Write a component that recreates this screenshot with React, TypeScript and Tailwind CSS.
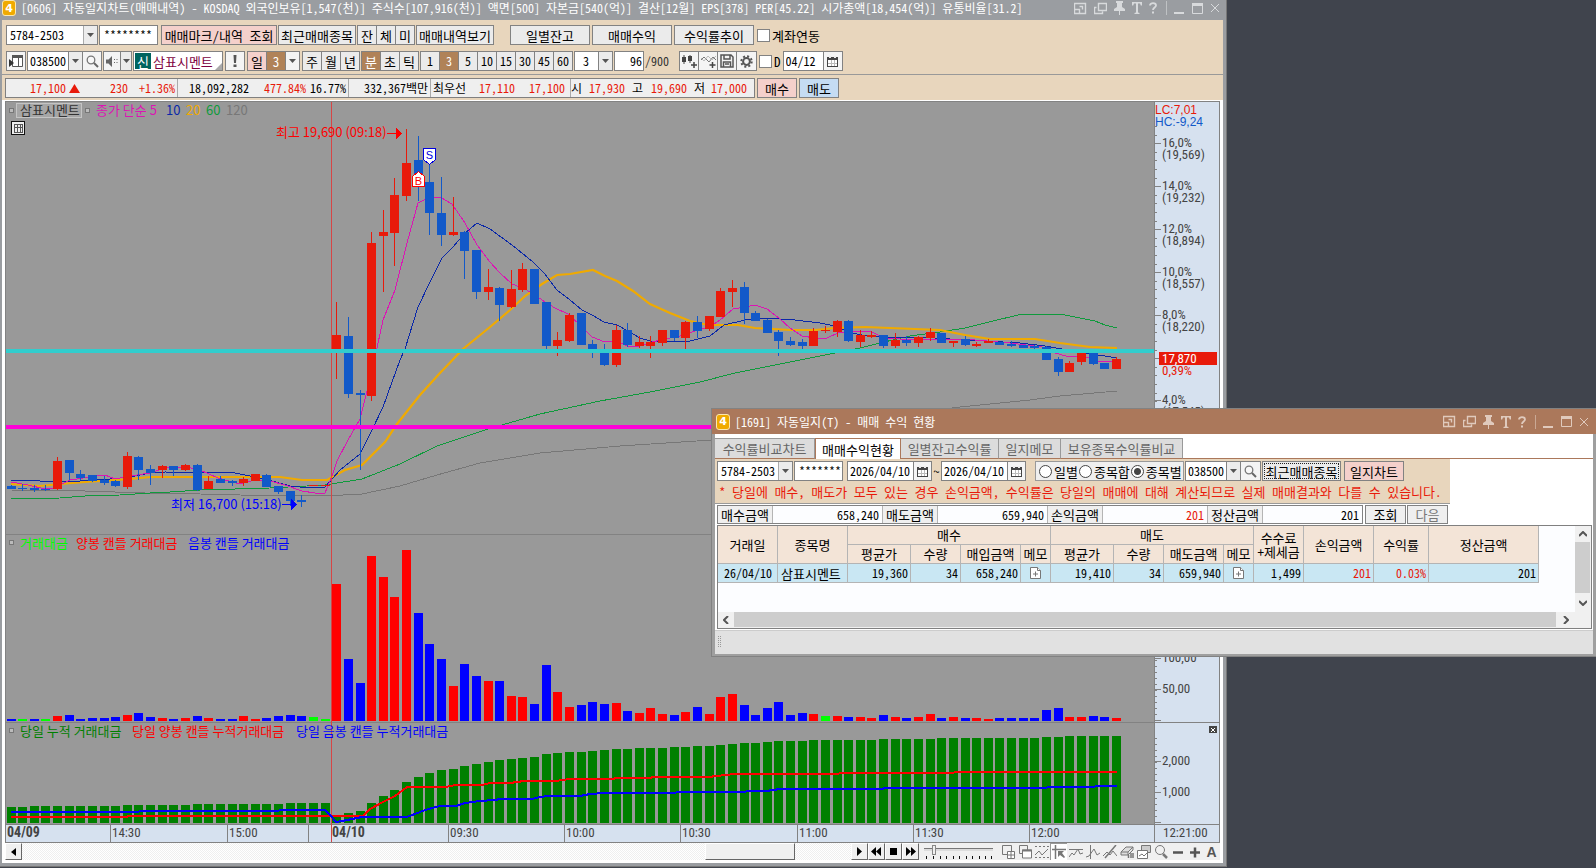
import type { ReactNode } from 'react';

const RED = '#e81a0a';
const BLUE = '#1259c9';
const PITCH = 11.635;

type Candle = [string, number, number, number, number];

/* colour, body top, body bottom, wick top, wick bottom */
const candles: Candle[] = [
  ['b', 486, 489, 485, 489], ['b', 488, 489, 484, 491], ['b', 488, 490, 485, 492], ['b', 489, 490, 485, 491],
  ['r', 461, 489, 457, 490], ['b', 460, 473, 460, 480], ['b', 474, 478, 470, 480], ['b', 475, 481, 475, 482],
  ['b', 480, 483, 476, 485], ['b', 481, 486, 480, 487], ['r', 456, 487, 452, 489], ['b', 457, 470, 456, 480],
  ['b', 469, 473, 465, 485], ['r', 466, 470, 465, 478], ['b', 466, 470, 466, 476], ['r', 465, 470, 464, 471],
  ['b', 465, 490, 464, 491], ['r', 481, 489, 476, 489], ['b', 479, 483, 476, 483], ['b', 481, 483, 480, 486],
  ['r', 479, 483, 477, 486], ['r', 474, 481, 474, 481], ['b', 475, 487, 474, 487], ['b', 486, 492, 486, 494],
  ['b', 491, 501, 491, 506], ['b', 500, 502, 495, 507], ['r', 485, 486, 485, 486], ['r', 485, 486, 485, 486],
  ['r', 335, 350, 302, 379], ['b', 336, 394, 317, 398], ['b', 393, 395, 390, 470], ['r', 243, 396, 232, 401],
  ['r', 232, 236, 210, 292], ['r', 195, 233, 178, 266], ['r', 163, 196, 129, 201], ['b', 160, 178, 136, 201],
  ['b', 182, 213, 163, 235], ['b', 213, 235, 177, 246], ['r', 232, 235, 197, 236], ['b', 232, 251, 231, 279],
  ['b', 250, 292, 250, 299], ['r', 287, 292, 269, 300], ['b', 288, 305, 287, 321], ['r', 289, 307, 270, 308],
  ['r', 269, 290, 263, 292], ['b', 269, 304, 269, 304], ['b', 302, 346, 302, 349], ['r', 340, 346, 332, 356],
  ['r', 315, 341, 313, 342], ['b', 313, 345, 313, 345], ['b', 344, 349, 340, 358], ['b', 350, 365, 344, 366],
  ['r', 330, 365, 325, 367], ['b', 330, 345, 323, 347], ['r', 342, 346, 336, 348], ['r', 342, 346, 336, 358],
  ['r', 330, 343, 330, 346], ['b', 330, 338, 330, 341], ['r', 322, 338, 321, 349], ['b', 322, 331, 316, 338],
  ['r', 316, 329, 316, 331], ['r', 291, 317, 288, 317], ['r', 288, 292, 280, 307], ['b', 287, 313, 282, 324],
  ['b', 313, 321, 311, 321], ['b', 320, 333, 319, 333], ['b', 332, 341, 330, 356], ['b', 341, 345, 337, 346],
  ['b', 342, 346, 339, 349], ['r', 331, 346, 328, 346], ['r', 330, 331, 326, 333], ['r', 321, 332, 320, 337],
  ['b', 321, 341, 320, 342], ['r', 335, 342, 330, 347], ['r', 335, 337, 331, 338], ['b', 335, 346, 335, 348],
  ['r', 340, 346, 333, 348], ['b', 340, 343, 336, 346], ['r', 337, 343, 336, 347], ['r', 332, 338, 328, 341],
  ['b', 333, 343, 333, 343], ['r', 341, 343, 341, 347], ['b', 339, 345, 336, 346], ['r', 344, 346, 342, 347],
  ['r', 341, 343, 339, 343], ['b', 342, 345, 342, 345], ['b', 344, 346, 341, 347], ['b', 345, 348, 345, 348],
  ['b', 346, 348, 345, 349], ['b', 347, 360, 346, 360], ['b', 359, 372, 357, 376], ['r', 363, 372, 361, 372],
  ['r', 353, 362, 353, 365], ['b', 353, 364, 353, 365], ['b', 363, 369, 363, 369], ['r', 359, 369, 357, 369],
];

const volumes =
  'b2 g2 b2 g2 r5 b6 b2 b3 b3 b4 r6 b8 b4 r3 b2 r3 b5 r3 b2 b2 r5 r2 b3 b5 b6 b5 g4 g2 r137 b62 b38 r165 r144 r124 r171 b108 b77 b62 r35 b57 b45 r40 b40 r25 r24 b17 b56 r29 r14 b16 b19 b17 r18 b10 r8 r13 r7 b6 r9 b14 r7 r24 r27 b16 b6 b13 b19 b6 b8 r7 g5 r5 b4 r4 r3 b6 r4 b3 r4 r7 b3 r4 b3 r3 r2 b3 b3 b3 b3 b11 b13 r4 r4 b5 b4 r3'
    .split(' ')
    .map((v) => ({ tone: v[0], h: Number(v.slice(1)) }));

const totals = [
  16, 16, 17, 17, 17, 17, 17, 17, 17, 17, 18, 18, 18, 18, 18, 18, 19, 19, 19, 19, 19, 19, 19, 19, 20, 20, 20, 20,
  7, 10, 12, 20, 27, 33, 41, 46, 50, 53, 54, 57, 59, 61, 63, 64, 65, 66, 69, 70, 71, 71, 72, 73, 74, 74, 75, 75, 75,
  76, 76, 77, 77, 78, 79, 80, 80, 81, 82, 82, 82, 83, 83, 83, 83, 83, 83, 84, 84, 84, 84, 84, 85, 85, 85, 85, 85, 85,
  85, 85, 85, 86, 86, 87, 87, 87, 87, 87,
];

const ma5 =
  '11,482 28,485 45,489 54,488 70,480 90,477 105,475 115,479 130,476 150,473 165,468 187,467 200,470 218,478 240,484 255,480 270,481 285,485 302,491 315,493 325,493 332,476 337,461 348,440 360,419 366,395 377,348 383,320 395,290 407,243 418,203 430,197 440,197 452,204 465,223 477,245 490,262 500,273 512,284 525,289 535,295 545,302 555,308 568,314 580,325 592,337 605,342 615,341 628,346 640,346 652,342 670,338 685,335 697,330 708,328 720,320 733,309 745,307 755,305 767,309 779,318 790,328 802,336 815,338 827,338 838,333 850,331 862,331 872,332 884,338 900,339 950,339 975,340 1010,343 1042,347 1055,353 1066,356 1075,356 1090,358 1100,362 1117,361';
const ma10 =
  '11,480 40,481 80,481 110,479 130,477 150,473 165,472 235,473 265,479 290,486 300,487 325,487 340,470 360,454 372,430 383,407 400,360 405,349 418,307 430,282 442,258 453,247 465,233 477,223 490,229 512,245 533,262 545,274 557,290 570,300 582,310 592,315 604,322 617,325 628,331 640,338 650,341 690,341 710,336 724,325 745,320 765,318 795,320 820,323 835,326 848,332 862,335 885,337 920,337 950,339 985,341 1020,343 1045,346 1062,349 1090,354 1105,356 1117,358';
const ma20 =
  '11,484 40,486 60,484 85,482 130,479 150,477 165,477 280,477 302,480 327,480 345,470 362,465 385,442 397,424 420,395 440,373 463,349 490,327 510,310 525,296 542,284 557,275 570,274 593,270 605,276 617,281 633,291 650,304 670,313 690,321 708,325 738,325 755,328 790,330 815,330 835,328 865,327 940,330 965,335 990,339 1035,339 1060,343 1090,347 1117,348';
const ma60 =
  '11,499 60,498 85,496 120,495 150,493 170,492 200,490 270,488 325,485 362,479 400,464 437,446 488,429 540,414 600,401 650,392 700,382 735,373 770,366 800,360 835,353 860,348 880,343 910,336 940,332 965,328 985,323 1022,314 1040,315 1060,314 1080,318 1095,321 1105,325 1117,328';
const ma120 =
  '11,490 85,491 145,493 200,494 240,495 325,496 362,494 400,486 437,475 480,463 540,453 620,446 712,440 800,429 900,415 960,407 1030,400 1060,396 1117,391';
const upTotal =
  '11,817 127,817 128,816 363,816 370,809 383,802 395,796 407,787 446,787 455,785 482,785 490,783 510,783 524,781 555,781 570,779 612,779 617,778 648,778 655,777 708,777 735,774 838,774 840,773 953,773 955,772 1117,772';
const downTotal =
  '11,812 138,812 140,811 278,811 280,810 325,810 330,815 336,822 342,821 352,819 362,817 407,817 415,814 425,810 440,806 456,806 465,803 480,801 495,800 500,799 532,799 540,797 548,796 580,796 590,794 605,793 675,793 677,792 745,792 747,791 766,791 780,789 882,789 885,788 1046,788 1048,787 1094,787 1096,786 1117,786';

const barX = (i: number) => Math.floor(7 + PITCH * i);
const toneFill: Record<string, string> = { r: '#ff0000', b: '#0000ff', g: '#00ff00' };

const priceTicks = [
  { y: 143, a: '16,0%', b: '(19,569)' },
  { y: 186, a: '14,0%', b: '(19,232)' },
  { y: 229, a: '12,0%', b: '(18,894)' },
  { y: 272, a: '10,0%', b: '(18,557)' },
  { y: 315, a: '8,0%', b: '(18,220)' },
  { y: 400, a: '4,0%', b: '(17,545)' },
];
const minorTicks = Array.from({ length: 38 }, (_, i) => Math.round(126 + i * 8.6)).filter((y) => y < 530);
const times = [
  { x: 110, t: '14:30' }, { x: 227, t: '15:00' }, { x: 448, t: '09:30' }, { x: 564, t: '10:00' },
  { x: 680, t: '10:30' }, { x: 797, t: '11:00' }, { x: 913, t: '11:30' }, { x: 1029, t: '12:00' },
];

function Tag({ x, y, fill, children }: { x: number; y: number; fill: string; children: ReactNode }) {
  return (
    <text x={x} y={y + 5} fill={fill} className="font-['Noto_Sans_CJK_KR',sans-serif] text-[13px]">
      {children}
    </text>
  );
}

function Axis({ x, y, fill = '#444', bold, children }: { x: number; y: number; fill?: string; bold?: boolean; children: ReactNode }) {
  return (
    <text
      x={x}
      y={y + 5}
      fill={fill}
      className={
        bold
          ? "font-['Roboto_Condensed','Liberation_Sans',sans-serif] text-[14px] font-bold"
          : "font-['Roboto_Condensed','Liberation_Sans',sans-serif] text-[13px]"
      }
    >
      {children}
    </text>
  );
}

function Chart() {
  return (
    <svg viewBox="5 101 1215 742" className="block w-full" shapeRendering="crispEdges" role="img" aria-label="삼표시멘트 3분 차트">
      <rect x="5" y="101" width="1215" height="742" fill="#828282" />
      <rect x="6" y="102" width="1148" height="432" fill="#999" />
      <rect x="6" y="535" width="1148" height="187" fill="#999" />
      <rect x="6" y="723" width="1148" height="101" fill="#999" />
      <rect x="1155" y="102" width="64" height="432" fill="#d6e1ef" />
      <rect x="1155" y="535" width="64" height="187" fill="#d6e1ef" />
      <rect x="1155" y="723" width="64" height="101" fill="#d6e1ef" />
      <rect x="6" y="825" width="1148" height="17" fill="#d6e1ef" />
      <rect x="1155" y="825" width="64" height="17" fill="#d6e1ef" />

      {volumes.map((v, i) => (
        <rect key={i} x={barX(i)} y={721 - v.h} width="9" height={v.h} fill={toneFill[v.tone]} />
      ))}
      {totals.map((h, i) => (
        <rect key={i} x={barX(i)} y={823 - h} width="9" height={h} fill="#008000" />
      ))}

      <g fill="none" strokeWidth="1">
        <polyline points={ma120} stroke="#777" />
        <polyline points={ma60} stroke="#0f9a3c" />
        <polyline points={ma20} stroke="#f0aa00" strokeWidth="2.200" shapeRendering="geometricPrecision" />
        <polyline points={ma10} stroke="#0a28a8" />
        <polyline points={ma5} stroke="#dc14b4" />
      </g>
      {candles.map(([tone, top, bottom, high, low], i) => (
        <g key={i} fill={tone === 'r' ? RED : BLUE}>
          <rect x={barX(i) + 4} y={high} width="1" height={Math.max(low - high, 1)} />
          <rect x={barX(i)} y={top} width="9" height={bottom - top} />
        </g>
      ))}
      <rect x="331" y="102" width="1" height="740" fill="#d64545" />
      <polyline points={upTotal} fill="none" stroke="#ff0000" strokeWidth="2" />
      <polyline points={downTotal} fill="none" stroke="#0000ff" strokeWidth="2" />
      <rect x="6" y="349" width="1148" height="4" fill="#32cdcd" />
      <rect x="6" y="425" width="1148" height="4" fill="#ff00d8" />

      <path d="M423.500 148.500h12v11l-6 5-6-5z" fill="#fff" stroke="#0000e0" />
      <text x="429.500" y="159" textAnchor="middle" fill="#0000e0" className="font-['Liberation_Sans',sans-serif] text-[11px]">S</text>
      <path d="M412.500 186.500h12v-10l-6-5-6 5z" fill="#fff" stroke="#f00" />
      <text x="418.500" y="185" textAnchor="middle" fill="#f00" className="font-['Liberation_Sans',sans-serif] text-[11px]">B</text>

      <text x="276" y="137" fill="#f00" className="font-['Noto_Sans_CJK_KR',sans-serif] text-[13px]">최고 19,690 (09:18)</text>
      <path d="M387 133h9v-5l6 5-6 6v-5h-9z" fill="#f00" />
      <text x="171" y="509" fill="#00f" className="font-['Noto_Sans_CJK_KR',sans-serif] text-[13px]">최저 16,700 (15:18)</text>
      <path d="M282 504h9v-5l6 5-6 6v-5h-9z" fill="#00f" />

      <g fill="#bbb" stroke="#777">
        <rect x="9.500" y="108.500" width="4" height="4" />
        <rect x="85.500" y="108.500" width="4" height="4" />
        <rect x="9.500" y="540.500" width="4" height="4" />
        <rect x="9.500" y="728.500" width="4" height="4" />
      </g>
      <rect x="16.500" y="103.500" width="65" height="14" fill="#a6a6a6" stroke="#c4c4c4" />
      <Tag x={20} y={110} fill="#333">삼표시멘트</Tag>
      <Tag x={96} y={110} fill="#dc14b4">종가 단순 5</Tag>
      <Tag x={166} y={110} fill="#0a28a8">10</Tag>
      <Tag x={186} y={110} fill="#f0aa00">20</Tag>
      <Tag x={206} y={110} fill="#0f9a3c">60</Tag>
      <Tag x={226} y={110} fill="#777">120</Tag>
      <rect x="11.500" y="121.500" width="13" height="13" fill="#eee" stroke="#111" />
      <path d="M14 124.500h9M14 127.500h9M14 132.500h9M14.500 124v9M17.500 124v9M20.500 124v9M22.500 124v9" stroke="#555" fill="none" />

      <Tag x={20} y={543} fill="#00ff00">거래대금</Tag>
      <Tag x={76} y={543} fill="#ff0000">양봉 캔들 거래대금</Tag>
      <Tag x={188} y={543} fill="#0000ff">음봉 캔들 거래대금</Tag>
      <Tag x={20} y={731} fill="#008000">당일 누적 거래대금</Tag>
      <Tag x={132} y={731} fill="#ff0000">당일 양봉 캔들 누적거래대금</Tag>
      <Tag x={296} y={731} fill="#0000ff">당일 음봉 캔들 누적거래대금</Tag>

      {minorTicks.map((y) => (
        <rect key={y} x="1155" y={y} width="2" height="1" fill="#828282" />
      ))}
      {Array.from({ length: 30 }, (_, i) => 720 - i * 6).map((y) => (
        <rect key={y} x="1155" y={y} width="2" height="1" fill="#828282" />
      ))}
      {Array.from({ length: 15 }, (_, i) => 822 - i * 6).map((y) => (
        <rect key={y} x="1155" y={y} width="2" height="1" fill="#828282" />
      ))}
      {[143, 186, 229, 272, 315, 358, 400, 658, 689, 720, 761, 792, 822].map((y) => (
        <rect key={y} x="1155" y={y} width="6" height="1" fill="#828282" />
      ))}
      {priceTicks.map((p) => (
        <g key={p.y}>
          <Axis x={1162} y={p.y - 1}>{p.a}</Axis>
          <Axis x={1162} y={p.y + 11}>{p.b}</Axis>
        </g>
      ))}
      <rect x="1159" y="352" width="58" height="13" fill={RED} />
      <Axis x={1162} y={358} fill="#fff">17,870</Axis>
      <Axis x={1162} y={370} fill={RED}>0,39%</Axis>
      <text x="1155" y="114" fill={RED} className="font-['Liberation_Sans',sans-serif] text-[12px]">LC:7,01</text>
      <text x="1155" y="126" fill={BLUE} className="font-['Liberation_Sans',sans-serif] text-[12px]">HC:-9,24</text>
      <Axis x={1162} y={657}>100,00</Axis>
      <Axis x={1162} y={688}>50,00</Axis>
      <Axis x={1162} y={760}>2,000</Axis>
      <Axis x={1162} y={791}>1,000</Axis>
      <rect x="1209" y="726" width="8" height="7" fill="#444" />
      <path d="M1211 728l4 4M1215 728l-4 4" stroke="#fff" />

      {[308, ...times.map((t) => t.x)].map((x) => (
        <rect key={x} x={x} y="825" width="1" height="17" fill="#828282" />
      ))}
      {times.map((t) => (
        <Axis key={t.t} x={t.x + 2} y={832}>{t.t}</Axis>
      ))}
      <Axis x={7} y={832} bold>04/09</Axis>
      <Axis x={332} y={832} bold>04/10</Axis>
      <Axis x={1163} y={832}>12:21:00</Axis>
    </svg>
  );
}

/* ---------- small controls ---------- */

const face = 'flex h-5 items-center justify-center border border-[#828282] text-[13px] leading-none';

function Btn({ className = '', children, label }: { className?: string; children: ReactNode; label?: string }) {
  return (
    <button type="button" aria-label={label} className={`${face} shrink-0 whitespace-nowrap ${className || 'bg-[#ebebeb]'}`}>
      {children}
    </button>
  );
}

function Group({ items, active, large }: { items: string[]; active?: number; large?: boolean }) {
  return (
    <div className={large ? 'flex h-5 shrink-0 border-y border-l border-[#828282] text-[13px]' : 'flex h-5 shrink-0 border-y border-l border-[#828282] text-[12px]'}>
      {items.map((t, i) => (
        <button
          key={t}
          type="button"
          className={
            i === active
              ? 'flex w-[19px] items-center justify-center border-r border-[#828282] bg-[#b08258] leading-none text-white'
              : 'flex w-[19px] items-center justify-center border-r border-[#828282] bg-[#ebebeb] leading-none'
          }
        >
          {t}
        </button>
      ))}
    </div>
  );
}

function Down() {
  return (
    <svg width="7" height="4" viewBox="0 0 7 4" aria-hidden="true">
      <path d="M0 0h7L3.500 4z" fill="#555" />
    </svg>
  );
}

function Pick({ label, value, className }: { label: string; value: string; className: string }) {
  return (
    <div className={`flex h-5 shrink-0 border border-[#828282] bg-white ${className}`}>
      <select aria-label={label} defaultValue={value} className="min-w-0 flex-1 appearance-none pl-[3px] leading-none outline-none">
        <option>{value}</option>
      </select>
      <span className="flex w-3.5 shrink-0 items-center justify-center border-l border-[#aaa] bg-[#ececec]">
        <Down />
      </span>
    </div>
  );
}

function Field({ label, value, className }: { label: string; value: string; className: string }) {
  return (
    <input
      aria-label={label}
      defaultValue={value}
      className={`h-5 min-w-0 shrink-0 border border-[#828282] bg-white pb-0.5 leading-none outline-none ${className}`}
    />
  );
}

function Check({ id, children }: { id: string; children: ReactNode }) {
  return (
    <label htmlFor={id} className="flex shrink-0 items-center gap-0.5 text-[13px] leading-none whitespace-nowrap">
      <input id={id} type="checkbox" className="size-[13px] appearance-none border border-[#828282] bg-white" />
      {children}
    </label>
  );
}

function Radio({ id, name, checked, children }: { id: string; name: string; checked?: boolean; children: ReactNode }) {
  return (
    <label htmlFor={id} className="flex items-center gap-0.5 text-[13px] leading-none whitespace-nowrap">
      <input
        id={id}
        name={name}
        type="radio"
        defaultChecked={checked}
        className="size-[13px] appearance-none rounded-full border border-[#444] bg-white checked:bg-[radial-gradient(circle,#444_0_3px,#fff_4px)]"
      />
      {children}
    </label>
  );
}

function Calendar() {
  return (
    <svg width="11" height="11" viewBox="0 0 11 11" shapeRendering="crispEdges" aria-hidden="true">
      <path d="M0 1h11v10H0z" fill="#444" />
      <path d="M1 4h9v6H1z" fill="#fff" />
      <path d="M1 7h9M4 4v6M7 4v6" stroke="#bbb" />
      <path d="M2 0h2v2H2zM7 0h2v2H7z" fill="#ececec" />
    </svg>
  );
}

function Search() {
  return (
    <svg width="13" height="13" viewBox="0 0 13 13" aria-hidden="true">
      <circle cx="5" cy="5" r="3.800" fill="#f8f8f8" stroke="#777" strokeWidth="1.300" />
      <path d="M8 8l4 4" stroke="#666" strokeWidth="2" />
    </svg>
  );
}

function Badge() {
  return (
    <span className="flex h-4 w-3.5 shrink-0 items-center justify-center rounded-[3px] border border-[#fbe7ae] bg-[#f0aa00] font-['DejaVu_Sans',sans-serif] text-[11px] leading-none font-bold text-white">
      4
    </span>
  );
}

const windowTools: { label: string; art: ReactNode }[] = [
  { label: '축소', art: <path d="M.5 1.500h11v10H.5zM.5 7.500h5v4M5.500 4.500h3v3" /> },
  { label: '복제', art: <path d="M4.500 1.500h8v7h-8zM2.500 5.500h-2v6h8v-2" /> },
];

function WindowTools() {
  return (
    <div className="flex h-4 shrink-0 items-center gap-[7px]">
      {windowTools.map((w) => (
        <button key={w.label} type="button" aria-label={w.label}>
          <svg width="13" height="13" viewBox="0 0 13 13" fill="none" stroke="currentColor" strokeWidth="1.400">{w.art}</svg>
        </button>
      ))}
      <button type="button" aria-label="고정">
        <svg width="11" height="14" viewBox="0 0 11 14" fill="currentColor"><path d="M2 0h7v2H8v4l3 2v2H6v4H5v-4H0V8l3-2V2H2z" /></svg>
      </button>
      <button type="button" aria-label="글꼴">
        <svg width="10" height="12" viewBox="0 0 10 12" fill="currentColor"><path d="M0 0h10v3.500H8.800L8 1.500H6v9l1.500.5v1h-5v-1L4 10.500v-9H2L1.200 3.500H0z" /></svg>
      </button>
      <button type="button" aria-label="도움말">
        <svg width="8" height="12" viewBox="0 0 8 12"><path d="M1 3.500C1 .3 7 .3 7 3.500 7 5.500 4 5.500 4 8" fill="none" stroke="currentColor" strokeWidth="1.800" /><path d="M3 9.500h2v2H3z" fill="currentColor" /></svg>
      </button>
      <span className="ml-0.5 h-3.5 w-px bg-current opacity-60" />
      <button type="button" aria-label="최소화">
        <svg width="11" height="12" viewBox="0 0 11 12"><path d="M0 10h10v2H0z" fill="currentColor" /></svg>
      </button>
      <button type="button" aria-label="최대화">
        <svg width="11" height="11" viewBox="0 0 11 11" fill="none" stroke="currentColor"><path d="M.5 1h10v9.500H.5z" /><path d="M0 1.500h11" strokeWidth="3" /></svg>
      </button>
      <button type="button" aria-label="닫기">
        <svg width="10" height="10" viewBox="0 0 10 10" stroke="currentColor"><path d="M1 1l8 8M9 1L1 9" /></svg>
      </button>
    </div>
  );
}

/* ---------- main window ---------- */

const iconFace = 'bg-[#f4f4f4] w-5';

function Toolbar() {
  return (
    <div className="bg-[#e8d6bd] pt-[5px] pb-0.5">
      <div className="flex items-center gap-px pl-1">
        <Pick label="계좌" value="5784-2503" className="w-[92px]" />
        <Field label="비밀번호" value="********" className="mr-0.5 w-[59px] pl-1" />
        <Btn className="w-[116px] bg-[#f4d0cb]">매매마크/내역 조회</Btn>
        <Btn className="w-[78px] bg-[#ebebeb]">최근매매종목</Btn>
        <Group items={['잔', '체', '미']} large />
        <Btn className="w-[78px] bg-[#ebebeb]">매매내역보기</Btn>
        <div className="mr-0.5 ml-[15px] flex gap-0.5">
          <Btn className="w-20 bg-[#ebebeb]">일별잔고</Btn>
          <Btn className="w-20 bg-[#ebebeb]">매매수익</Btn>
          <Btn className="w-20 bg-[#ebebeb]">수익률추이</Btn>
        </div>
        <Check id="account-link">계좌연동</Check>
      </div>
      <div className="mt-1.5 flex items-center gap-px pl-1">
        <Btn label="종목 목록" className={iconFace}>
          <svg width="14" height="14" viewBox="0 0 14 14"><path d="M3.500 1.500h10v11h-10z" fill="#fff" stroke="#555" /><path d="M3 1h11v3H3z" fill="#555" /><path d="M9.500 3v10" stroke="#555" /><path d="M0 5l5 4-5 4z" fill="#333" /></svg>
        </Btn>
        <div className="flex">
          <Field label="종목코드" value="038500" className="w-[42px] pl-0.5" />
          <Btn label="종목코드 목록" className="w-3.5 border-l-0 bg-[#ececec]"><Down /></Btn>
          <Btn label="종목 검색" className="w-[19px] border-l-0 bg-[#f4f4f4]"><Search /></Btn>
        </div>
        <div className="flex">
          <Btn label="음성" className="w-[18px] bg-[#f4f4f4]">
            <svg width="12" height="11" viewBox="0 0 12 11"><path d="M0 3.500h2.500L6 0v11L2.500 7.500H0z" fill="#666" /><path d="M8 3h1v1H8zM8 6h1v1H8zM10.500 3h1v1h-1zM10.500 6h1v1h-1z" fill="#666" /></svg>
          </Btn>
          <Btn label="음성 설정" className="w-[11px] border-l-0 bg-[#ececec]"><Down /></Btn>
        </div>
        <div className="relative flex h-5 w-[90px] shrink-0 items-center gap-0.5 border border-[#828282] bg-white pl-px text-[13px] leading-none text-[#800040]">
          <span className="flex size-4 items-center justify-center bg-[#00645f] text-white">신</span>
          삼표시멘트
          <svg width="7" height="7" viewBox="0 0 7 7" className="absolute right-0 bottom-0"><path d="M7 0v7H0z" fill="#aaa" /></svg>
        </div>
        <div className="mr-px ml-px">
          <Btn label="알림" className={iconFace}>
            <svg width="4" height="12" viewBox="0 0 4 12" fill="#555"><path d="M.5 0h3L3 8H1zM.5 9.500h3V12h-3z" /></svg>
          </Btn>
        </div>
        <div className="mr-px flex">
          <Btn className="w-5 bg-[#f4d0cb]">일</Btn>
          <Btn className="w-[19px] border-l-0 bg-[#b08258] text-white">3</Btn>
          <Btn label="일 주기" className="w-3.5 border-l-0 bg-[#f4f4f4]"><Down /></Btn>
        </div>
        <Group items={['주', '월', '년']} large />
        <Group items={['분', '초', '틱']} active={0} large />
        <Group items={['1', '3', '5', '10', '15', '30', '45', '60']} active={1} />
        <div className="flex">
          <Field label="주기" value="3" className="w-[25px] pl-2" />
          <Btn label="주기 목록" className="w-3.5 border-l-0 bg-[#ececec]"><Down /></Btn>
        </div>
        <Field label="봉 개수" value="96" className="w-[30px] pr-px text-right" />
        <span className="mr-2 w-[25px] leading-none text-[#333]">/900</span>
        <div className="mr-px flex">
          <Btn label="차트 종류" className={iconFace}>
            <svg width="15" height="13" viewBox="0 0 15 13"><path d="M0 2h4v5H0zM6 1h4v5H6z" fill="#444" /><path d="M2 0v9M8 0v8" stroke="#444" /><path d="M12 7v6M9 10h6" stroke="#444" strokeWidth="1.500" /></svg>
          </Btn>
          <Btn label="지표 추가" className="w-[19px] border-l-0 bg-[#f4f4f4]">
            <svg width="15" height="13" viewBox="0 0 15 13" fill="none"><path d="M0 5l3-3 5 5 4-5 3 3" stroke="#777" /><path d="M0 3l3 3 4-5 4 4 4-4" stroke="#bbb" /><path d="M11.500 7v6M8.500 10h6" stroke="#444" strokeWidth="1.500" /></svg>
          </Btn>
          <Btn label="저장" className="w-[19px] border-l-0 bg-[#f4f4f4]">
            <svg width="14" height="14" viewBox="0 0 14 14" fill="none" stroke="#555" strokeWidth="1.500"><path d="M1 1h10l2 2v10H1zM4 1v4h6V1M3.500 13V8h7v5M5 10h4" /></svg>
          </Btn>
          <Btn label="설정" className="w-5 border-l-0 bg-[#f4f4f4]">
            <svg width="13" height="13" viewBox="0 0 13 13" fill="none" stroke="#555"><circle cx="6.500" cy="6.500" r="3.400" strokeWidth="2" /><circle cx="6.500" cy="6.500" r="5.200" strokeWidth="2" strokeDasharray="2.040 2.040" /></svg>
          </Btn>
        </div>
        <Check id="use-date">D</Check>
        <div className="flex pl-px">
          <Field label="일자" value="04/12" className="w-10 border-r-0 pl-0.5" />
          <Btn label="달력" className={iconFace}><Calendar /></Btn>
        </div>
      </div>
      <div className="mt-[3px] h-px bg-[#999]" />
      <div className="mt-[3px] flex items-center gap-0.5 pl-[3px] leading-none">
        <div className="flex h-5 w-[750px] shrink-0 items-center border border-[#808080] bg-[#efefef] whitespace-nowrap text-[#e81a0a]">
          <span className="flex w-[74px] items-center justify-end gap-[3px]">
            17,100
            <svg width="11" height="9" viewBox="0 0 11 9"><path d="M5.500 0L11 9H0z" fill={RED} /></svg>
          </span>
          <span className="w-12 text-right">230</span>
          <span className="flex h-full w-[50px] items-center justify-end border-r border-[#aaa] pr-0.5">+1.36%</span>
          <span className="w-[71px] text-right text-black">18,092,282</span>
          <span className="w-[57px] text-right">477.84%</span>
          <span className="flex h-full w-[43px] items-center justify-end border-r border-[#aaa] pr-0.5 text-black">16.77%</span>
          <span className="flex h-full w-[82px] items-center justify-end border-r border-[#aaa] pr-0.5 text-black">332,367백만</span>
          <span className="w-[39px] pl-0.5 text-black">최우선</span>
          <span className="w-[45px] text-right">17,110</span>
          <span className="flex h-full w-[56px] items-center justify-end border-r border-[#aaa] pr-[5px]">17,100</span>
          <span className="w-[18px] text-black">시</span>
          <span className="w-[43px]">17,930</span>
          <span className="w-[19px] text-black">고</span>
          <span className="w-[43px]">19,690</span>
          <span className="w-[17px] text-black">저</span>
          <span>17,000</span>
        </div>
        <Btn className="w-10 bg-[#f4d0cb]">매수</Btn>
        <Btn className="w-10 bg-[#c5dcf3]">매도</Btn>
      </div>
    </div>
  );
}

const raised = 'flex h-[17px] w-[17px] shrink-0 items-center justify-center border border-l-white border-t-white border-r-[#666] border-b-[#666] bg-[#f0f0f0]';

const players = [
  { label: '재생', d: 'M3 1l5 4.500-5 4.500z' },
  { label: '뒤로', d: 'M5 1v9L0 5.500zM10 1v9L5 5.500z' },
  { label: '정지', d: 'M2 2h7v7H2z' },
  { label: '앞으로', d: 'M1 1v9l5-4.500zM6 1v9l5-4.500z' },
];

const drawTools: { label: string; art: ReactNode }[] = [
  { label: '창 추가', art: <><path d="M1.500.5h9v9h-9z" /><path d="M6.500 6.500h7v7h-7zM10 6.500v7M6.500 10h7" fill="#fff" /></> },
  { label: '창 겹치기', art: <><path d="M1.500.5h8v8h-8z" /><path d="M4.500 5h9v8h-9z" fill="#fff" /><path d="M4 5.500h10" strokeWidth="2" /></> },
  { label: '영역', art: <><path d="M0 1.500h14M0 12.500h14" strokeDasharray="2 2" /><path d="M0 10l4-4 3 4 6-6" /></> },
  { label: '선택', art: <><path d="M0 4.500h14M3.500 0v14" strokeWidth="1.500" /><path d="M6 6h6l-2 2 3 4-1 1-4-3-2 2z" fill="#777" stroke="none" /></> },
  { label: '수평선', art: <><path d="M0 4.500h14" /><path d="M0 12l3-4 2 2 4-6 2 5 3-1" /></> },
  { label: '수직선', art: <><path d="M4.500 0v14" /><path d="M0 12l3-1 5-7 3 6 3-2" /></> },
  { label: '추세선', art: <><path d="M2 13L13 0" strokeWidth="1.500" /><path d="M0 11l4-4 3 3 3-4 4 5" /></> },
  { label: '전체 지우기', art: <><path d="M1 7l5-5h7l-5 5zM1 7v3h7V7M8 10l5-5V2" fill="#ddd" /><path d="M8.500 13v-3M11 13V8M13 13V8" strokeWidth="1.500" /></> },
  { label: '화면 복사', art: <><path d="M4.500.5h9v7h-9z" fill="#ccc" /><path d="M.5 5.500h10v8H.5z" fill="#fff" /><path d="M2 11l3-2 2 2 3-3" /></> },
  { label: '확대경', art: <><circle cx="6" cy="5" r="4.500" /><path d="M9 9l4 4" strokeWidth="2.500" /></> },
  { label: '축소', art: <path d="M2 7.500h10" strokeWidth="2.500" stroke="#555" /> },
  { label: '확대', art: <path d="M2 7.500h10M7 2.500v10" strokeWidth="2.500" stroke="#555" /> },
];

function BottomBar() {
  return (
    <div className="flex h-[17px] items-center bg-[#f0f0f0]">
      <div className="flex h-full min-w-0 flex-1 bg-[repeating-conic-gradient(#ffffff_0_25%,#efefef_0_50%)] bg-[length:2px_2px]">
        <button type="button" aria-label="왼쪽" className={raised}>
          <svg width="5" height="8" viewBox="0 0 5 8"><path d="M5 0v8L0 4z" /></svg>
        </button>
        <span className="flex-[685_1_0%]" />
        <span className="flex-[88_1_0%] border border-t-white border-r-[#666] border-b-[#666] border-l-white bg-[#f0f0f0]" />
        <span className="flex-[56_1_0%]" />
      </div>
      {players.map((p) => (
        <button key={p.label} type="button" aria-label={p.label} className={raised}>
          <svg width="11" height="11" viewBox="0 0 11 11"><path d={p.d} /></svg>
        </button>
      ))}
      <svg width="70" height="15" viewBox="0 0 70 15" className="mr-[5px] ml-[5px] shrink-0" shapeRendering="crispEdges" aria-hidden="true">
        <path d="M0 4h69v3H0z" fill="#ddd" /><path d="M0 4.500h69" stroke="#777" />
        <rect x="8.500" y="1.500" width="3" height="9" fill="#f0f0f0" stroke="#888" />
        <path d="M2.500 12v3M9.500 12v3M16.500 12v3M22.500 12v3M29.500 12v3M35.500 12v3M42.500 12v3M48.500 12v3M55.500 12v3M61.500 12v3M67.500 12v3" stroke="#111" />
      </svg>
      {drawTools.map((t, i) => (
        <button
          key={t.label}
          type="button"
          aria-label={t.label}
          className={i === 3 ? 'flex h-[17px] w-[17px] items-center justify-center border-t border-l border-[#999] bg-white' : 'flex h-[17px] w-[17px] items-center justify-center'}
        >
          <svg width="14" height="14" viewBox="0 0 14 14" fill="none" stroke="#777">{t.art}</svg>
        </button>
      ))}
      <button type="button" className="flex h-[17px] w-[17px] items-center justify-center font-['Liberation_Sans',sans-serif] text-[14px] leading-none font-bold text-[#555]">A</button>
    </div>
  );
}

function MainWindow() {
  return (
    <section className="mr-[369px] border-r border-b border-[#777] bg-[#9a9da1] pr-[3px] pb-[3px] pl-0.5">
      <header className="flex h-5 items-start text-white">
        <Badge />
        <h1 className="ml-[5px] min-w-0 flex-1 truncate leading-4 whitespace-nowrap">
          [0606] 자동일지차트(매매내역) - KOSDAQ 외국인보유[1,547(천)] 주식수[107,916(천)] 액면[500] 자본금[540(억)] 결산[12월] EPS[378] PER[45.22] 시가총액[18,454(억)] 유통비율[31.2]
        </h1>
        <div className="mr-[3px] text-[#d8dadc]"><WindowTools /></div>
      </header>
      <Toolbar />
      <div className="bg-white px-[3px] pt-px pb-[3px]">
        <Chart />
        <BottomBar />
      </div>
    </section>
  );
}

/* ---------- profit window ---------- */

const tabs = [
  { t: '수익률비교차트', w: 'w-[100px]' },
  { t: '매매수익현황', w: 'w-[86px]' },
  { t: '일별잔고수익률', w: 'w-[98px]' },
  { t: '일지메모', w: 'w-[62px]' },
  { t: '보유종목수익률비교', w: 'w-[122px]' },
];

const columns = [60, 70, 63, 50, 60, 30, 63, 50, 60, 30, 50, 70, 55, 110];
const th = 'border-r border-b border-[#b4b4b4] p-0 text-[13px] font-normal leading-[14px]';
const td = 'border-r border-b border-[#b4b4b4] p-0 pr-0.5 text-right leading-none';

function Memo() {
  return (
    <button type="button" aria-label="메모 추가" className="block">
      <svg width="11" height="12" viewBox="0 0 11 12" fill="#fff" stroke="#777"><path d="M.5.5h7l3 3v8H.5z" /><path d="M7.500.5v3h3M3 7h5M5.500 4.500v5" /></svg>
    </button>
  );
}

function DateBox({ label }: { label: string }) {
  return (
    <div className="flex">
      <Field label={label} value="2026/04/10" className="w-[66px] border-r-0 pl-0.5" />
      <Btn label={`${label} 달력`} className="w-[19px] bg-[#f4f4f4]"><Calendar /></Btn>
    </div>
  );
}

function Sum({ label, value, className, red }: { label: string; value: string; className: string; red?: boolean }) {
  return (
    <div className={`flex items-center ${className}`}>
      <span className="flex h-full w-[55px] shrink-0 items-center justify-center border-r border-[#b4b4b4] bg-[#efefef] text-[13px] whitespace-nowrap">{label}</span>
      <span className={red ? 'flex-1 pr-[3px] text-right text-[#e81a0a]' : 'flex-1 pr-[3px] text-right'}>{value}</span>
    </div>
  );
}

function ProfitWindow() {
  return (
    <section className="absolute top-[408px] right-0 left-[711px] border border-r-0 border-[#828282] bg-[#9f9f9f] pb-0.5">
      <header className="flex h-[25px] items-center bg-[#ab785b] pl-1 text-white">
        <Badge />
        <h2 className="ml-[5px] flex-1 leading-none">[1691] 자동일지(T) - 매매 수익 현황</h2>
        <div className="mr-[7px] text-[#e0cabd]"><WindowTools /></div>
      </header>
      <div className="mr-[3px] ml-[3px] bg-white">
        <div role="tablist" className="flex items-end pt-1">
          {tabs.map((t, i) => (
            <button
              key={t.t}
              type="button"
              role="tab"
              aria-selected={i === 1}
              className={
                i === 1
                  ? `${t.w} h-[21px] border-x border-t border-[#ab785b] bg-white text-[13px] leading-none`
                  : `${t.w} h-[21px] border-t border-r border-b border-t-[#999] border-r-[#999] border-b-[#ab785b] bg-[#dcdcdc] text-[13px] leading-none text-[#666]`
              }
            >
              {t.t}
            </button>
          ))}
          <span className="h-px flex-1 bg-[#ab785b]" />
        </div>
        <div className="w-[735px] border-b border-[#999] bg-[#e8d6bd] pt-0.5">
          <div className="flex items-center pl-0.5">
            <Pick label="계좌번호" value="5784-2503" className="mr-px w-[76px]" />
            <Field label="계좌 비밀번호" value="********" className="mr-1 w-[49px] pl-1" />
            <DateBox label="시작일" />
            <span className="w-[9px] text-center leading-none">~</span>
            <DateBox label="종료일" />
            <div className="ml-[9px] flex h-5 w-[149px] items-center gap-px border border-[#999] bg-[#efefef] pl-[3px]" role="radiogroup" aria-label="조회 기준">
              <Radio id="by-day" name="basis">일별</Radio>
              <Radio id="by-sum" name="basis">종목합</Radio>
              <Radio id="by-item" name="basis" checked>종목별</Radio>
            </div>
            <div className="ml-px flex">
              <Field label="조회 종목코드" value="038500" className="w-[42px] pl-0.5" />
              <Btn label="조회 종목 목록" className="w-3.5 border-l-0 bg-[#ececec]"><Down /></Btn>
              <Btn label="조회 종목 검색" className="w-5 border-l-0 bg-[#f4f4f4]"><Search /></Btn>
            </div>
            <button type="button" className="ml-px flex h-5 w-[79px] shrink-0 items-center justify-center border border-[#828282] bg-[#ebebeb] p-px text-[13px] leading-none whitespace-nowrap">
              <span className="flex size-full items-center justify-center border border-dotted border-[#222]">최근매매종목</span>
            </button>
            <button type="button" className="ml-[3px] h-5 w-[60px] shrink-0 border border-[#828282] bg-[#f4d0cb] text-[13px] leading-none">일지차트</button>
          </div>
          <p className="pl-1 text-[13px] leading-[22px] whitespace-nowrap text-[#e81a0a]">
            * 당일에 매수, 매도가 모두 있는 경우 손익금액, 수익률은 당일의 매매에 대해 계산되므로 실제 매매결과와 다를 수 있습니다.
          </p>
        </div>
        <div className="mt-px flex items-center gap-0.5 pl-0.5 leading-none">
          <div className="flex h-[19px] w-[646px] border border-[#828282] bg-[#fcfdff]">
            <Sum label="매수금액" value="658,240" className="w-[165px] border-r border-[#b4b4b4]" />
            <Sum label="매도금액" value="659,940" className="w-[165px] border-r border-[#b4b4b4]" />
            <Sum label="손익금액" value="201" className="w-[160px] border-r border-[#b4b4b4]" red />
            <Sum label="정산금액" value="201" className="flex-1" />
          </div>
          <button type="button" className="h-[19px] w-[41px] border border-[#828282] bg-[#efefef] text-[13px] leading-none">조회</button>
          <button type="button" className="-ml-px h-[19px] w-[41px] border border-[#828282] bg-[#efefef] text-[13px] leading-none text-[#777]">다음</button>
        </div>
        <div className="mt-px mr-px ml-0.5 border border-[#808080] bg-[#f0f0f0]">
          <div className="flex">
            <div className="h-[86px] min-w-0 flex-1 overflow-hidden bg-[#fcfdff]">
              <table className="w-[821px] table-fixed border-separate border-spacing-0">
                <colgroup>
                  {columns.map((w, i) => (
                    <col key={i} style={{ width: w }} />
                  ))}
                </colgroup>
                <thead className="bg-[#f3e4d7]">
                  <tr className="h-[19px]">
                    <th rowSpan={2} className={th}>거래일</th>
                    <th rowSpan={2} className={th}>종목명</th>
                    <th colSpan={4} className={th}>매수</th>
                    <th colSpan={4} className={th}>매도</th>
                    <th rowSpan={2} className={th}>수수료<br />+제세금</th>
                    <th rowSpan={2} className={th}>손익금액</th>
                    <th rowSpan={2} className={th}>수익률</th>
                    <th rowSpan={2} className={th}>정산금액</th>
                  </tr>
                  <tr className="h-[19px]">
                    {['평균가', '수량', '매입금액', '메모', '평균가', '수량', '매도금액', '메모'].map((t, i) => (
                      <th key={i} className={th}>{t}</th>
                    ))}
                  </tr>
                </thead>
                <tbody className="bg-[#c9e7f3]">
                  <tr className="h-[19px]">
                    <td className={`${td} pr-[5px]`}>26/04/10</td>
                    <td className="border-r border-b border-[#b4b4b4] p-0 pl-[3px] text-[13px] leading-none">삼표시멘트</td>
                    <td className={td}>19,360</td>
                    <td className={td}>34</td>
                    <td className={td}>658,240</td>
                    <td className="border-r border-b border-[#b4b4b4] p-0 pl-[9px]"><Memo /></td>
                    <td className={td}>19,410</td>
                    <td className={td}>34</td>
                    <td className={td}>659,940</td>
                    <td className="border-r border-b border-[#b4b4b4] p-0 pl-[9px]"><Memo /></td>
                    <td className={td}>1,499</td>
                    <td className={`${td} text-[#e81a0a]`}>201</td>
                    <td className={`${td} text-[#e81a0a]`}>0.03%</td>
                    <td className={td}>201</td>
                  </tr>
                </tbody>
              </table>
            </div>
            <div className="mr-px flex w-[15px] flex-col">
              <button type="button" aria-label="위로" className="flex h-4 items-center justify-center">
                <svg width="8" height="6" viewBox="0 0 8 6" fill="none" stroke="#555" strokeWidth="2"><path d="M0 5l4-4 4 4" /></svg>
              </button>
              <span className="h-[51px] bg-[#cdcdcd]" />
              <button type="button" aria-label="아래로" className="flex flex-1 items-center justify-center">
                <svg width="8" height="6" viewBox="0 0 8 6" fill="none" stroke="#555" strokeWidth="2"><path d="M0 1l4 4 4-4" /></svg>
              </button>
            </div>
          </div>
          <div className="mb-px flex h-[15px]">
            <button type="button" aria-label="왼쪽으로" className="flex w-4 items-center justify-center">
              <svg width="6" height="8" viewBox="0 0 6 8" fill="none" stroke="#555" strokeWidth="2"><path d="M5 0L1 4l4 4" /></svg>
            </button>
            <span className="flex-1 bg-[#cdcdcd]" />
            <button type="button" aria-label="오른쪽으로" className="mr-4 flex w-[19px] items-center justify-center">
              <svg width="6" height="8" viewBox="0 0 6 8" fill="none" stroke="#555" strokeWidth="2"><path d="M1 0l4 4-4 4" /></svg>
            </button>
          </div>
        </div>
        <div className="mt-px h-6 border-t border-[#ccc] bg-[#e1e1e1] pt-[5px] pl-[3px]">
          <svg width="3" height="11" viewBox="0 0 3 11" shapeRendering="crispEdges" aria-hidden="true">
            <path d="M.5 0v11M2.500 0v11" stroke="#999" strokeDasharray="1 1" />
          </svg>
        </div>
      </div>
    </section>
  );
}

export default function App() {
  return (
    <div className="relative min-h-screen bg-[#40444d] font-['Noto_Sans_Mono_CJK_KR','Noto_Sans_CJK_KR',monospace] text-[12px] text-black">
      <MainWindow />
      <ProfitWindow />
    </div>
  );
}
